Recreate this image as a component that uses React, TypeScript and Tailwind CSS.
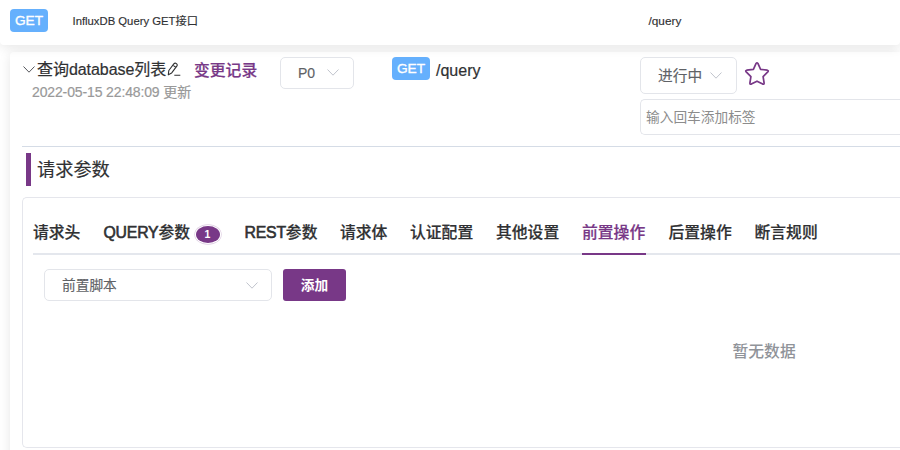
import React from "react";

const tabs = [
  { latin: "", label: "请求头", width: "w-[47px]", gap: "mr-[23.5px]" },
  { latin: "QUERY", label: "参数", width: "w-[86px]", gap: "mr-[7px]", count: 1 },
  { latin: "REST", label: "参数", width: "w-[73px]", gap: "mr-[22.5px]" },
  { latin: "", label: "请求体", width: "w-[47px]", gap: "mr-[23px]" },
  { latin: "", label: "认证配置", width: "w-[63px]", gap: "mr-[23px]" },
  { latin: "", label: "其他设置", width: "w-[63px]", gap: "mr-[23px]" },
  { latin: "", label: "前置操作", width: "w-[64px]", gap: "mr-[22.5px]", active: true },
  { latin: "", label: "后置操作", width: "w-[63px]", gap: "mr-[23px]" },
  { latin: "", label: "断言规则", width: "w-[63px]", gap: "" },
];

function Chevron({ className }: { className: string }) {
  return (
    <svg viewBox="0 0 12 7" fill="none" stroke="currentColor" className={`shrink-0 ${className}`}>
      <path d="M.5.5 6 6.2 11.5.5" />
    </svg>
  );
}

function Method() {
  return (
    <span className="flex h-[23px] w-[38px] shrink-0 items-center justify-center rounded-[4px] bg-[#65b0fd] text-[13.7px] leading-none text-white [-webkit-text-stroke:0.35px_white]">
      GET
    </span>
  );
}

function Select({ label, className, chevron }: { label: string; className: string; chevron: string }) {
  return (
    <div className={`flex shrink-0 items-center justify-between rounded-[5px] border border-[#e3e5ea] bg-white text-[#606266] ${className}`}>
      <span className="[-webkit-text-stroke:0.15px_currentColor]">{label}</span>
      <Chevron className={`mb-[2px] text-[#c0c4cc] ${chevron}`} />
    </div>
  );
}

export default function App() {
  return (
    <div className="flex h-[450px] w-[900px] flex-col overflow-hidden bg-white font-['Liberation_Sans','Noto_Sans_CJK_SC',sans-serif] whitespace-nowrap text-[#303133]">
      <header className="relative z-10 flex h-[45px] shrink-0 items-start rounded-b-[4px] bg-white pt-[9px] pl-[10px] text-[11.8px] leading-[24px] shadow-[0_2px_12px_rgba(0,0,0,0.1)]">
        <Method />
        <span className="ml-[24.5px] w-[576px] text-[11.3px] [-webkit-text-stroke:0.15px_currentColor]">InfluxDB Query GET接口</span>
        <span className="[-webkit-text-stroke:0.15px_currentColor]">/query</span>
      </header>

      <main className="mt-[7px] ml-[10px] flex h-[420px] shrink-0 flex-col rounded-tl-[4px] bg-white pl-[12px] shadow-[0_2px_12px_rgba(0,0,0,0.1)]">
        <section className="flex h-[95px] shrink-0 items-start border-b border-[#d5dce6]">
          <div className="w-[258px] shrink-0 pt-[5px]">
            <div className="flex h-[25px] items-center">
              <Chevron className="mr-[2px] ml-px h-[7px] w-[12px] text-[#55575c]" />
              <span className="w-[130px] text-[16px] leading-[24px] tracking-[-0.05px] [-webkit-text-stroke:0.2px_currentColor]">查询database列表</span>
              <svg viewBox="0 0 14 15" fill="none" stroke="currentColor" strokeWidth="1.1" strokeLinejoin="round" className="h-[15px] w-[14px] shrink-0">
                <path d="m1.8 8.5 5-6.6Q8 .6 9.4 1.6t.4 2.6L4.7 10.9l-3.4 1.9.5-4.3Zm4.1-5.4 2.9 2.3M7.3 13.3h6" />
              </svg>
              <span className="mt-[2px] ml-[13px] text-[15.8px] font-medium text-[#783887] [-webkit-text-stroke:0.2px_#783887]">变更记录</span>
            </div>
            <div className="mt-[-1px] ml-[10px] text-[14px] leading-[22px] tracking-[-0.13px] text-[#999] [-webkit-text-stroke:0.2px_currentColor]">2022-05-15 22:48:09 更新</div>
          </div>
          <Select label="P0" className="mt-[5px] h-[32px] w-[74px] pr-[14px] pl-[17px] text-[14px]" chevron="h-[7px] w-[12px]" />
          <div className="ml-[38px] flex w-[248px] shrink-0 items-start pt-[5px]">
            <Method />
            <span className="ml-[6px] pt-px text-[16px] leading-[26px] [-webkit-text-stroke:0.2px_currentColor]">/query</span>
          </div>
          <div className="min-w-0 flex-1 pt-[5px]">
            <div className="flex items-center">
              <Select label="进行中" className="h-[37px] w-[97px] pt-px pr-[14px] pl-[17px] text-[14.7px]" chevron="h-[7px] w-[12px]" />
              <svg viewBox="0 0 26 26" fill="none" stroke="#783887" strokeWidth="1.7" strokeLinejoin="round" className="mb-[3px] ml-[7px] h-[26px] w-[26px]">
                <path d="M12.1 2.4q.9-1.3 1.8 0l2.7 5.9 6.7.9q1.6.4.5 1.7l-4.7 4.7 1 6.4q.1 1.7-1.4 1.1L13 20.2l-5.7 2.9q-1.5.6-1.4-1.1l1-6.4-4.7-4.7q-1.1-1.3.5-1.7l6.7-.9Z" />
              </svg>
            </div>
            <div className="mt-[5px] flex h-[36px] items-center rounded-l-[5px] border border-r-0 border-[#e3e5ea] pt-[3px] pl-[5px] text-[13.7px] text-[#8c8c8c]">输入回车添加标签</div>
          </div>
        </section>

        <h2 className="mt-[6px] ml-[4px] flex h-[33px] shrink-0 items-center border-l-[5px] border-[#783887] pl-[6px] text-[18.2px] leading-[26px] font-normal [-webkit-text-stroke:0.15px_currentColor]">请求参数</h2>

        <section className="mt-[11px] h-[251px] shrink-0 rounded-l-[5px] border border-r-0 border-[#e5e6ec] pl-[10px]">
          <nav className="flex h-[57px] items-stretch border-b-2 border-[#e4e7ed] pt-[15px] text-[15.8px] font-medium">
            {tabs.map((tab) => (
              <div key={tab.latin + tab.label} className={`flex shrink-0 ${tab.gap}`}>
                <div className={`mb-[-2px] flex shrink-0 items-center [-webkit-text-stroke:0.2px_currentColor] ${tab.width} ${tab.active ? "border-b-2 border-[#783887] text-[#783887]" : "border-b-2 border-transparent"}`}>
                  {tab.latin && <span className="tracking-[-0.2px] [-webkit-text-stroke:0.6px_currentColor]">{tab.latin}</span>}
                  {tab.label}
                </div>
                {tab.count && (
                  <span className="mt-[13px] mr-[18px] ml-[6px] flex h-[17px] w-[24px] items-center justify-center rounded-[50%] bg-[#783887] text-[10.5px] font-bold text-white shadow-[0_0_0_1px_#fff,0_0_0_1.7px_#dfcfe3]">{tab.count}</span>
                )}
              </div>
            ))}
          </nav>
          <div className="mt-[14px] ml-[11px] flex">
            <Select label="前置脚本" className="h-[32px] w-[228px] pt-[2px] pr-[13px] pl-[17px] text-[13.7px]" chevron="h-[7px] w-[12px]" />
            <button className="ml-[11px] h-[32px] w-[63px] rounded-[3px] bg-[#783887] pt-[2px] text-[13.7px] font-bold text-white">添加</button>
          </div>
          <div className="mt-[39px] ml-[699.5px] text-[15.8px] leading-[24px] font-medium text-[#909399]">暂无数据</div>
        </section>
      </main>
    </div>
  );
}
